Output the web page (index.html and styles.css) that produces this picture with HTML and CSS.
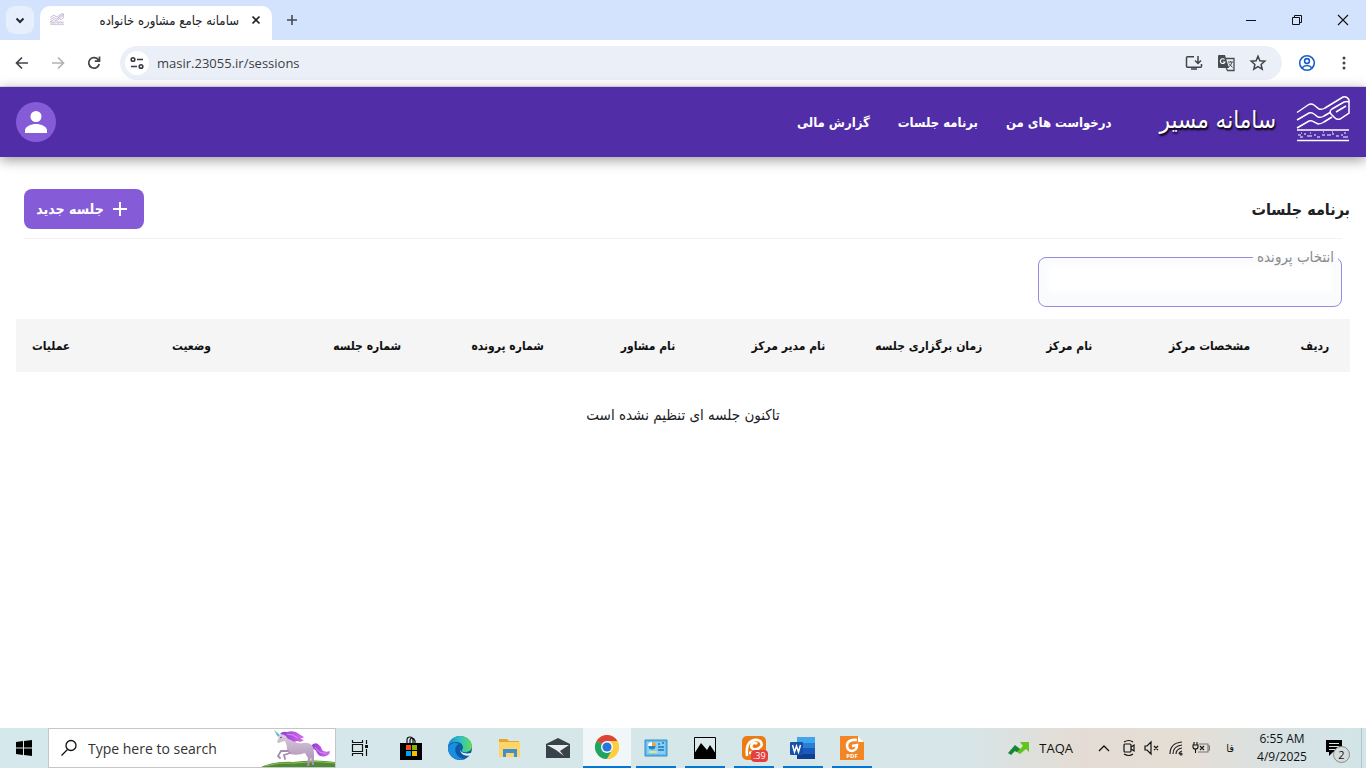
FILE: index.html
```html
<!DOCTYPE html>
<html lang="fa">
<head>
<meta charset="utf-8">
<title>سامانه جامع مشاوره خانواده</title>
<link rel="stylesheet" href="styles.css">
</head>
<body>
<svg class="defs" aria-hidden="true">
  <symbol id="masir" viewBox="0 0 54 48">
    <path d="M1 18.500L12 11q3-2 6 0l5 4q3 1 6-1L47 3q4-1 6 3v13l-9 6q-3 1-5-1l-4-4q-2-3 1-5l12-7q3-1 5 0M1 26l12-7q3-1 5 1l4 3q3 1 6-1l7-4M1 34l12-7q3-1 5 1l4 2q3 0 6-2l8-5M40 18l10-6M1 36h52M1 46.500h52" fill="none" stroke="currentColor" stroke-width="1.500"/>
    <path d="M2 41h3M4 43h3M8 40h2M11 42h5M18 41h2M21 43h3M26 41h3M31 41h4M36 40h2M40 42h3M45 41h2M47 43h5M5 39h1M14 39h1M27 38h1M36 38h1M48 39h2" stroke="currentColor" stroke-width="1.200"/>
  </symbol>
</svg>
<div class="tabs">
  <button class="tab-search" aria-label="Search tabs"><svg width="20" height="20" viewBox="0 0 20 20"><path d="M6.500 8.500L10 12l3.500-3.500" fill="none" stroke="#1f2937" stroke-width="2"/></svg></button>
  <div class="tab">
    <svg class="favicon" width="14" height="14" viewBox="0 0 54 48"><use href="#masir"/></svg>
    <span class="tab-title" dir="rtl">سامانه جامع مشاوره خانواده</span>
    <button class="plain" aria-label="Close tab"><svg width="16" height="16" viewBox="0 0 16 16"><path d="M4.500 4.500l7 7M11.500 4.500l-7 7" stroke="#222" stroke-width="1.700"/></svg></button>
  </div>
  <button class="plain new-tab" aria-label="New tab"><svg width="16" height="16" viewBox="0 0 16 16"><path d="M8 3v10M3 8h10" stroke="#444a55" stroke-width="1.600"/></svg></button>
  <div class="window-buttons">
    <button class="plain" aria-label="Minimize"><svg width="12" height="12" viewBox="0 0 12 12"><path d="M1 6.500h10" stroke="#111"/></svg></button>
    <button class="plain" aria-label="Restore"><svg width="12" height="12" viewBox="0 0 12 12"><path d="M1.500 3.500h7v7h-7zM3.500 3V1.500h7v7H9" fill="none" stroke="#111"/></svg></button>
    <button class="plain" aria-label="Close"><svg width="12" height="12" viewBox="0 0 12 12"><path d="M1 1l10 10M11 1L1 11" stroke="#111" stroke-width="1.100"/></svg></button>
  </div>
</div>
<div class="toolbar">
  <button class="plain" aria-label="Back"><svg width="20" height="20" viewBox="0 0 20 20"><path d="M16 10H5M10 4.500L4.500 10l5.500 5.500" fill="none" stroke="#40444a" stroke-width="1.700"/></svg></button>
  <button class="plain" aria-label="Forward"><svg width="20" height="20" viewBox="0 0 20 20"><path d="M4 10h11M10 4.500l5.500 5.500-5.500 5.500" fill="none" stroke="#b0b2b5" stroke-width="1.700"/></svg></button>
  <button class="plain" aria-label="Reload"><svg width="20" height="20" viewBox="0 0 20 20"><path d="M14.500 7A5.300 5.300 0 1 0 15.200 11M15.500 3.500v4.700h-4.700" fill="none" stroke="#40444a" stroke-width="1.700"/></svg></button>
  <div class="address">
    <button class="plain site-info" aria-label="Site information"><svg width="16" height="16" viewBox="0 0 16 16" fill="none" stroke="#333940" stroke-width="1.600"><circle cx="4" cy="4.500" r="1.800"/><path d="M8 4.500h6M2 11.500h6"/><circle cx="12" cy="11.500" r="1.800"/></svg></button>
    <input class="url" type="text" aria-label="Address" value="masir.23055.ir/sessions">
    <button class="plain" aria-label="Install"><svg width="18" height="18" viewBox="0 0 18 18" fill="none" stroke="#40444a" stroke-width="1.500"><path d="M9 2.700H2.500q-1 0-1 1v8.600q0 1 1 1h13q1 0 1-1V10M13 2v7M10 6.500l3 3 3-3M6 15h6"/></svg></button>
    <button class="plain" aria-label="Translate"><svg width="18" height="18" viewBox="0 0 18 18"><path d="M2 1h6l4 13H2q-1 0-1-1V2q0-1 1-1z" fill="#484c52"/><path d="M9 4.500h8v12h-6.500l-1.500-3" fill="none" stroke="#484c52" stroke-width="1.300"/><path d="M7.500 5.500A2.400 2.400 0 1 0 8 8H5.700" fill="none" stroke="#fff" stroke-width="1.100"/><path d="M11 8h5M13.500 7v1M15 8q-1 4-3.500 5M12 9.500l3.500 4" fill="none" stroke="#484c52"/></svg></button>
    <button class="plain" aria-label="Bookmark"><svg width="18" height="18" viewBox="0 0 18 18"><path d="M9 2.300l1.900 4.500 4.900.4-3.700 3.200 1.100 4.800L9 12.700l-4.200 2.500 1.100-4.800-3.700-3.200 4.900-.4z" fill="none" stroke="#40444a" stroke-width="1.500"/></svg></button>
  </div>
  <button class="plain" aria-label="Profile"><svg width="18" height="18" viewBox="0 0 18 18" fill="none" stroke="#1b5fc1" stroke-width="1.600"><circle cx="9" cy="9" r="7.300"/><circle cx="9" cy="7" r="2.400"/><path d="M4 14q2-2.500 5-2.500T14 14"/></svg></button>
  <button class="plain menu" aria-label="Menu"><svg width="16" height="16" viewBox="0 0 16 16" fill="#40444a"><circle cx="8" cy="3" r="1.500"/><circle cx="8" cy="8" r="1.500"/><circle cx="8" cy="13" r="1.500"/></svg></button>
</div>
<div class="app" dir="rtl">
  <header class="header">
    <svg class="logo" width="54" height="48" viewBox="0 0 54 48"><use href="#masir"/></svg>
    <span class="brand">سامانه مسیر</span>
    <nav class="nav">
      <a href="#requests">درخواست های من</a>
      <a href="#sessions">برنامه جلسات</a>
      <a href="#finance">گزارش مالی</a>
    </nav>
    <button class="avatar" aria-label="حساب کاربری"><svg width="24" height="24" viewBox="0 0 24 24" fill="#fff"><circle cx="12" cy="6.500" r="5.500"/><path d="M1 23v-2.500C1 16.500 7 14 12 14s11 2.500 11 6.500V23z"/></svg></button>
  </header>
  <main class="main">
    <div class="heading">
      <h1>برنامه جلسات</h1>
      <button class="new-session"><svg width="16" height="16" viewBox="0 0 16 16"><path d="M8 1v14M1 8h14" stroke="#fff" stroke-width="2"/></svg>جلسه جدید</button>
    </div>
    <hr class="rule">
    <fieldset class="case">
      <legend><label for="case">انتخاب پرونده</label></legend>
      <select id="case"><option></option></select>
    </fieldset>
    <table class="sessions">
      <colgroup><col class="narrow"><col span="7"><col class="wide"><col class="narrow"></colgroup>
      <thead><tr><th>ردیف</th><th>مشخصات مرکز</th><th>نام مرکز</th><th>زمان برگزاری جلسه</th><th>نام مدیر مرکز</th><th>نام مشاور</th><th>شماره پرونده</th><th>شماره جلسه</th><th>وضعیت</th><th>عملیات</th></tr></thead>
      <tbody><tr><td colspan="10">تاکنون جلسه ای تنظیم نشده است</td></tr></tbody>
    </table>
  </main>
</div>
<footer class="taskbar">
  <button class="task start" aria-label="Start"><svg width="16" height="16" viewBox="0 0 16 16"><path d="M0 2l7-1v6.500H0zM8 1l8-1v7.500H8zM0 8.500h7V15l-7-1zM8 8.500h8V16l-8-1z"/></svg></button>
  <div class="search">
    <svg width="18" height="18" viewBox="0 0 18 18" fill="none" stroke="#111" stroke-width="1.300"><circle cx="11" cy="6.500" r="5"/><path d="M7.500 10.500L1.500 16.500"/></svg>
    <input type="text" aria-label="Search" placeholder="Type here to search">
    <svg class="unicorn" width="74" height="38" viewBox="0 0 74 38">
      <defs><linearGradient id="coat" x2="0" y2="1"><stop stop-color="#ddd0e0"/><stop offset="1" stop-color="#a58ab0"/></linearGradient><linearGradient id="mane"><stop stop-color="#8f3bd6"/><stop offset="1" stop-color="#d56bea"/></linearGradient></defs>
      <path d="M0 38q14-6 32-5 22-3 42 0v5z" fill="#4c8a35"/><path d="M4 37q14-4 30-3 20-3 40 0" fill="none" stroke="#93c04c"/>
      <path d="M50 17q3-4 7-2 3 2 4 6 3 3 8 1 0 4-4 5-6 2-9-3-2-5-6-4z" fill="url(#mane)"/>
      <path d="M20 5q-2 2-3 5l-1 3q2 2 4 0l4-1q2 4 2 8 0 3 3 5 8 2 15-1l3 5-1 8h2l2-9 1 8h2v-11q0-4-1-7-3-5-10-4-6 1-9-2-3-5-7-8-3-2-6 1z" fill="url(#coat)"/>
      <path d="M27 22l-7 0-3 5 2 2M29 24l-6 2 1 4" fill="none" stroke="#a58bb1" stroke-width="1.800" stroke-linecap="round"/>
      <path d="M19 5q2-3 7-2 8-2 12 2 3 2 5 3-2 2-4 1 2 2 4 2-3 3-7 1-3 2-6-1-4-1-5-4-3-2-6-2z" fill="url(#mane)"/>
      <path d="M26 5q6 0 11 4M54 18q4 7 11 6" fill="none" stroke="#ecacf3" stroke-width=".7"/>
      <path d="M19 6L13 1l4 7z" fill="#61b8ca"/><circle cx="20" cy="8.500" r=".7" fill="#333"/>
    </svg>
  </div>
  <div class="apps">
    <button class="task" aria-label="Task view"><svg width="18" height="18" viewBox="0 0 18 18" fill="none" stroke="#111" stroke-width="1.200"><path d="M1.500 5.500h10v7h-10zM1.500 1v2.500h10V1M1.500 17v-2.500h10V17M15.500 1v4M15.500 10v7"/><path d="M14 6h3v3h-3z" fill="#111" stroke="none"/></svg></button>
    <button class="task" aria-label="Microsoft Store"><svg width="24" height="24" viewBox="0 0 24 24"><path d="M1 7h22v17H1z"/><path d="M8 8V4q0-3 3-3t3 3v4M11 7V5q0-3 2-3t3 3v2" fill="none" stroke="#111" stroke-width="1.200"/><path d="M7 9h5v5H7z" fill="#f25022"/><path d="M13 9h5v5h-5z" fill="#7fba00"/><path d="M7 15h5v5H7z" fill="#00a4ef"/><path d="M13 15h5v5h-5z" fill="#ffb900"/></svg></button>
    <button class="task" aria-label="Edge"><svg width="24" height="24" viewBox="0 0 24 24"><defs><linearGradient id="edge"><stop stop-color="#168bd2"/><stop offset=".5" stop-color="#2dc1c4"/><stop offset="1" stop-color="#64dc55"/></linearGradient></defs><circle cx="12" cy="12" r="12" fill="#0c59a4"/><path d="M0 12C0 5 5 0 12 0c8 0 12 6 12 10 0 5-5 7-9 6-2-1-1-2 0-4 0-4-3-6-7-6-5 0-8 3-8 6z" fill="url(#edge)"/><path d="M0 12c1-5 8-6 11-4-5 2-5 9 0 13q3 2 6 2C8 26 0 20 0 12z" fill="#1b8fde"/><path d="M13 10c-3 4 0 9 11 7v1l-1 1c-6 3-14-3-10-9z" fill="#e5f2f4"/></svg></button>
    <button class="task" aria-label="File Explorer"><svg width="24" height="24" viewBox="0 0 24 24"><path d="M2 3h8l2 2h10v5H2z" fill="#e8a52c"/><path d="M2 6h21v15H2z" fill="#ffd568"/><path d="M6 13h14v8h-3v-4h-8v4H6z" fill="#3e91d1"/></svg></button>
    <button class="task" aria-label="Mail"><svg width="24" height="20" viewBox="0 0 24 20"><path d="M0 6l12-6 12 6v14H0z" fill="#39424a"/><path d="M1 7h22l-9 6 4 5-8-6z" fill="#e5eef0"/></svg></button>
    <button class="task active" aria-label="Chrome"><svg width="24" height="24" viewBox="0 0 24 24"><circle cx="12" cy="12" r="12" fill="#ffcd40"/><path d="M12 12L1.600 6A12 12 0 0 1 22.400 6z" fill="#dc4437"/><path d="M12 12L1.600 6A12 12 0 0 0 12 24l5.500-9z" fill="#20a464"/><path d="M12 6h10.400A12 12 0 0 1 12 24l5-9z" fill="#ffcd40"/><circle cx="12" cy="12" r="6" fill="#fff"/><circle cx="12" cy="12" r="4.600" fill="#2876dc"/></svg></button>
    <button class="task open" aria-label="Control Panel"><svg width="24" height="20" viewBox="0 0 24 20"><path d="M1 2h22v16H1z" fill="#63baf0" stroke="#328fc5"/><path d="M3 4h18v12H3z" fill="#8bcdf3"/><circle cx="8" cy="8" r="3.500" fill="#1989d1"/><path d="M8 8V4a4 4 0 0 0-4 4z" fill="#fff"/><path d="M8 8V4a4 4 0 0 1 4 4z" fill="#f3a23e"/><path d="M14 6h2M18 5h2M14 9h6M14 12h6" stroke="#187db8" stroke-width="1.500"/><path d="M5 14h8" stroke="#dce979" stroke-width="2"/></svg></button>
    <button class="task open" aria-label="Photos"><svg width="24" height="24" viewBox="0 0 24 24"><path d="M1.500 1.500h21v21h-21z" fill="#dce9ed" stroke="#000"/><path d="M1 18l7-11 6 7 3-5 6 9v5H1z"/></svg></button>
    <button class="task open" aria-label="PDF editor"><svg width="24" height="24" viewBox="0 0 24 24"><rect width="24" height="24" rx="5" fill="#eb7b12"/><path d="M5 20q-1-9 2-13 5-5 11-2 4 4-1 7-3 2-6 1-3-2-1-5 3-2 5 0M17 12q-5 5-10 5" fill="none" stroke="#fff" stroke-width="2.600"/></svg><span class="badge">.39</span></button>
    <button class="task open" aria-label="Word"><svg width="26" height="24" viewBox="0 0 26 24"><path d="M7 1h18v22H7z" fill="#2b7cd3"/><path d="M7 1h18v6H7z" fill="#41a5ee"/><path d="M7 12h18v6H7z" fill="#185abd"/><path d="M7 18h18v5H7z" fill="#103f91"/><rect y="6" width="13" height="13" rx="1" fill="#174fa9"/><path d="M2.500 9l2 7 2-6 2 6 2-7" fill="none" stroke="#fff" stroke-width="1.500"/></svg></button>
    <button class="task open" aria-label="PDF reader"><svg width="24" height="24" viewBox="0 0 24 24"><path d="M0 0h18l6 6v18H0z" fill="#f28524"/><path d="M18 0v6h6z" fill="#fff"/><path d="M17 4q-9-1-10 5 0 6 5 6 5-1 5-6l-5 1" fill="none" stroke="#fff" stroke-width="2.600"/></svg><span class="pdf">PDF</span></button>
  </div>
  <div class="tray">
    <button class="stock"><svg width="22" height="14" viewBox="0 0 22 14"><path d="M9 6l3 2 3-3-3-4h9v10l-3-3-6 5-5-3z" fill="#62c51c"/><path d="M0 12l7-8 5 4-3 3-2-1-4 4z" fill="#16853b"/></svg>TAQA</button>
    <svg width="14" height="10" viewBox="0 0 14 10" fill="none" stroke="#111" stroke-width="1.300"><path d="M2 8l5-5 5 5"/></svg>
    <div class="status">
      <svg width="14" height="18" viewBox="0 0 14 18" fill="none" stroke="#111" stroke-width="1.200"><rect x="2" y="5" width="7" height="8" rx="1"/><path d="M9 8l3-2v6l-3-2M2 3q5-3 9 0M2 15q5 3 9 0"/></svg>
      <svg width="16" height="16" viewBox="0 0 16 16" fill="none" stroke="#111" stroke-width="1.200"><path d="M1 6v4h2l4 4V2L3 6zM10 6l4 4M14 6l-4 4"/></svg>
      <svg width="16" height="16" viewBox="0 0 16 16" fill="none" stroke="#222" stroke-width="1.200"><path d="M2 14Q2 3 14 2M5 14Q5 6 14 5M8 14Q8 9 14 8M11 14q0-2 3-3"/><circle cx="13" cy="14" r="1"/></svg>
      <svg width="18" height="16" viewBox="0 0 18 16" fill="none" stroke="#111" stroke-width="1.100"><path d="M2 2v3M5 2v3M1 5h5v2q0 2-2.500 2T1 7zM3.500 9v4M8 6l4 4M12 6l-4 4"/><path d="M7 4h9v8H6M16 6h1.500v4H16" stroke="#777"/></svg>
    </div>
    <span class="lang">فا</span>
    <div class="clock"><span>6:55 AM</span><span>4/9/2025</span></div>
    <button class="notes" aria-label="Notifications"><svg width="18" height="18" viewBox="0 0 18 18"><path d="M1 1h16v12H8l-4 4v-4H1z"/><path d="M4 4.500h10M4 7.500h10M4 10.500h6" stroke="#dbe4e4"/></svg><span class="count">2</span></button>
  </div>
</footer>
</body>
</html>
```
FILE: styles.css
```css
* { box-sizing: border-box; }
body { margin: 0; min-height: 100vh; display: flex; flex-direction: column; background: #fff; color: #202124; font-family: "Open Sans", "DejaVu Sans", sans-serif; font-size: 13px; }
button, input, select { font: inherit; color: inherit; }
button { border: 0; padding: 0; background: none; display: flex; align-items: center; justify-content: center; }
input { border: 0; background: none; padding: 0; min-width: 0; outline: 0; }
svg { display: block; flex: none; }
.defs { position: absolute; width: 0; height: 0; }

.tabs { display: flex; height: 40px; background: #d3e3fd; align-items: center; padding-left: 6px; }
.tab-search { width: 28px; height: 28px; border-radius: 9px; background: #e7effd; }
.tab { display: flex; align-items: center; align-self: flex-end; width: 232px; height: 34px; margin-left: 6px; padding: 0 8px 6px; background: #fff; border-radius: 10px 10px 0 0; }
.favicon { color: #70529b; align-self: flex-start; margin: 6px 0 0 2px; }
.tab-title { flex: 1; padding: 0 9px; font-family: "DejaVu Sans Condensed", "DejaVu Sans", sans-serif; font-size: 13px; white-space: nowrap; text-align: start; }
.new-tab { margin-left: 12px; }
.window-buttons { margin-left: auto; display: flex; gap: 34px; padding-right: 17px; }

.toolbar { display: flex; align-items: center; height: 47px; padding: 0 14px 0 12px; gap: 16px; border-bottom: 1px solid #e2e2e8; }
.address { flex: 1; display: flex; align-items: center; gap: 14px; height: 34px; padding: 0 15px 0 5px; background: #ebf0f8; border-radius: 17px; }
.site-info { width: 24px; height: 24px; background: #fff; border-radius: 50%; }
.url { flex: 1; margin-left: -6px; font-size: 13px; color: #3c4043; }
.menu { margin-left: 4px; }

.app { flex: 1; font-family: "DejaVu Sans Condensed", "DejaVu Sans", sans-serif; }
.header { display: flex; align-items: center; height: 70px; padding: 0 16px; background: #512da8; color: #fff; box-shadow: 0 3px 12px rgba(0, 0, 0, .4); position: relative; }
.logo { margin-top: -8px; }
.brand { margin-right: 20px; padding-bottom: 4px; font-size: 24px; line-height: 32px; text-shadow: 1px 2px 2px #000; white-space: nowrap; }
.nav { display: flex; gap: 28px; margin-right: 48px; font-size: 13px; font-weight: bold; }
.nav a { color: inherit; text-decoration: none; white-space: nowrap; }
.avatar { width: 40px; height: 40px; margin-right: auto; border-radius: 50%; background: #855bd8; }
.main { padding: 32px 16px 0; }
.heading { display: flex; justify-content: space-between; align-items: center; }
h1 { margin: 0; font-size: 16px; }
.new-session { width: 120px; height: 40px; margin-left: 8px; padding-right: 4px; gap: 8px; border-radius: 8px; background: #855bd8; color: #fff; font-size: 14px; font-weight: bold; }
.rule { height: 1px; margin: 9px 8px 0; border: 0; background: #f2f2f2; }
.case { width: 304px; height: 62px; margin: 6px 8px 0; padding: 0; border: 1px solid #9b89df; border-radius: 8px; min-width: 0; background: #fafbfd; }
.case legend { margin-right: 3px; padding: 0 4px; color: #8b8b8b; font-size: 15px; line-height: 24px; }
.case select { display: block; width: 272px; height: 16px; margin: 2px auto 0; border: 0; appearance: none; background: #fff; box-shadow: 0 0 6px 6px #fff; }
.sessions { width: 100%; margin-top: 12px; table-layout: fixed; border-collapse: collapse; text-align: center; }
.sessions th { height: 53px; padding: 0; background: #f5f5f5; color: #111; font-size: 12px; white-space: nowrap; }
.narrow { width: 5.26%; }
.wide { width: 15.8%; }
.sessions td { height: 86px; padding: 0; font-size: 15px; }

.taskbar { display: flex; height: 40px; color: #111; background: linear-gradient(90deg, #d5e8eb, #d6e6e9 70%, #e4dcd4 79%, #e5ded5 87%, #d7e2e4 94%, #d3e5e8); }
.task { position: relative; width: 48px; height: 40px; }
.search { display: flex; align-items: center; width: 288px; padding-left: 11px; border: 1px solid #c2c8ca; background: #fff; }
.search input { flex: 1; margin-left: 10px; font-size: 14px; }
.search input::placeholder { color: #333; opacity: 1; }
.apps { display: flex; gap: 1px; }
.apps .task:first-child { margin-right: 2px; }
.active { background: #f1f7f9; border-bottom: 2px solid #0078d7; }
.open::after { content: ""; position: absolute; left: 4px; right: 4px; bottom: 0; height: 2px; background: #0078d7; }
.badge { position: absolute; left: 21px; top: 22px; padding: 0 2px; border-radius: 4px; background: #e53e3d; color: #fff; font-size: 9px; line-height: 12px; }
.pdf { position: absolute; left: 0; right: 0; bottom: 8px; color: #fff; font-size: 6px; line-height: 8px; font-weight: bold; text-align: center; }
.tray { display: flex; align-items: center; margin-left: auto; }
.stock { gap: 9px; margin-right: 24px; }
.status { display: flex; align-items: center; gap: 8px; margin-left: 11px; }
.lang { width: 40px; text-align: center; font-family: "DejaVu Sans Condensed", sans-serif; font-size: 11px; }
.clock { display: flex; flex-direction: column; width: 64px; text-align: center; font-size: 12px; line-height: 18px; }
.notes { position: relative; width: 40px; height: 40px; margin-right: 12px; }
.count { position: absolute; left: 19px; top: 18px; width: 17px; height: 17px; border: 1px solid #888; border-radius: 50%; background: #d5dcdc; font-size: 11px; line-height: 15px; }
.tray::after { content: ""; width: 1px; height: 40px; margin: 0 4px 0 -5px; background: #b4c4c9; }
```
